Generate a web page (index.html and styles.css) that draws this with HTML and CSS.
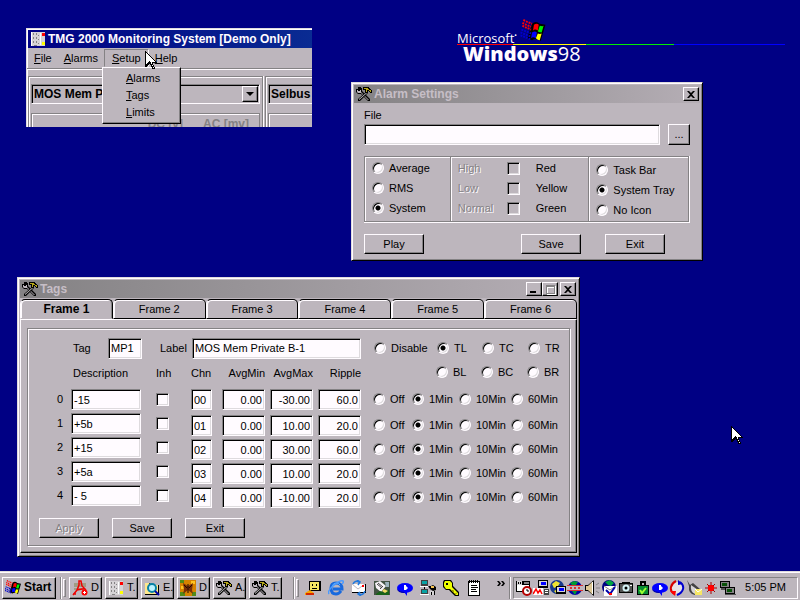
FILE: index.html
```
<!DOCTYPE html>
<html lang="en">
<head>
<meta charset="utf-8">
<title>TMG 2000 Monitoring System</title>
<link rel="stylesheet" href="styles.css">
</head>
<body>
<svg class="sprites" aria-hidden="true">
  <symbol id="tools" viewBox="0 0 16 16">
    <path d="M0 3h2V1h3v1h1v3l8 8v2h-2L5 8H2L0 6z" fill="#000"/>
    <path d="M1 4h1v1h2V4h1V3h0v3l1 1 7 7h-1L5 7H2L1 6z" fill="#bdb6bd"/>
    <path d="M10 6h2v1L4 15H2v-2z" fill="#000"/>
    <path d="M10 7h1L3 14v-1z" fill="#d6d3d6"/>
    <path d="M7 1h6v1h1v1h1v1h1v3h-2V6h-1V5h-1v2H9V4H7z" fill="#000"/>
    <path d="M8 2h4v1h1v1h2v2h-1V5h-1V4h-2v2h-1V3H8z" fill="#b5a618"/>
  </symbol>
  <symbol id="panel" viewBox="0 0 16 16">
    <path d="M1 1h14v14H1z" fill="#d6d3d6"/><path d="M1 1h1v14H1zM10 2h1v12h-1z" fill="#fff"/>
    <path d="M3 2h1v2H3zM3 6h1v2H3zM3 10h1v2H3zM6 2h1v2H6zM6 6h1v2H6zM6 10h1v2H6zM8 4h1v1H8zM8 8h1v1H8zM8 12h1v1H8zM4 14h3v1H4z" fill="#848284"/>
    <path d="M12 2h3v3h-3z" fill="#f00"/><path d="M12 11h3v3h-3z" fill="#ff0"/>
  </symbol>
  <symbol id="flag" viewBox="0 0 26 26">
    <path d="M12 5q4-4 8 0l6 1-5 17q-5-4-9-1l-5-2z" fill="#000"/>
    <path d="M14 6q3-2 5 0l-1 6q-3-2-5 0z" fill="#f00"/><path d="M20 7q3 1 4 0l-2 7q-2 0-4-1z" fill="#0e0"/>
    <path d="M12 14q3-2 5 0l-1 6q-3-2-5 0z" fill="#00f"/><path d="M18 15q2 1 4 0l-2 7q-2 0-4-2z" fill="#ff0"/>
    <path d="M3 1l4 2 5 2M2 4l4 2 5 2M2 7l4 2 5 2" stroke="#f00" stroke-width="2" stroke-dasharray="2 1" fill="none"/>
    <path d="M1 11l5 2 5 2M0 14l5 2 5 2M0 17l5 2 5 2" stroke="#00c" stroke-width="2" stroke-dasharray="2 1" fill="none"/>
  </symbol>
  <symbol id="acrobat" viewBox="0 0 16 16">
    <path d="M2 4h12M2 6h12M2 9h9" stroke="#84824a" stroke-width="1"/>
    <path d="M1 15l4-5 2-5V1h2l1 5 4 4M5 10l5-1h3M1 14h3" stroke="#e00" stroke-width="1.5" fill="none"/>
    <circle cx="12.500" cy="12.500" r="3" fill="#f00"/><path d="M11 12h3v1h-3zM12 11h1v3h-1z" fill="#fff"/>
  </symbol>
  <symbol id="explore" viewBox="0 0 16 16">
    <path d="M1 3h5l1 2h8v10H1z" fill="#000"/><path d="M1 3h4l1 2h8v9H1z" fill="#ffe78c"/>
    <circle cx="8" cy="8" r="4" fill="#bdf3ff" stroke="#0882a5" stroke-width="2"/><path d="M11 11l4 4" stroke="#00a" stroke-width="2"/>
  </symbol>
  <symbol id="butterfly" viewBox="0 0 16 16">
    <path d="M0 0h16v16H0z" fill="#d68200"/><path d="M0 0h4v3H0zM12 12h4v4h-4zM0 12h5v4H0z" fill="#528a18"/><path d="M11 1h4v3h-4zM1 6h3v3H1z" fill="#ffc321"/>
    <path d="M3 3l5 3 5-3-1 7 1 4-5-4-5 4 1-4z" fill="#7b3008"/><path d="M8 4v9M4 5l3 3M12 5L9 8" stroke="#210800"/>
  </symbol>
  <symbol id="shell" viewBox="0 0 16 16">
    <path d="M4 1h12v10H4z" fill="#000"/><path d="M5 2h9v8H5z" fill="#f7e763"/><path d="M7 4h1v2H7zM11 4h1v2h-1zM7 8h5v1H7z" fill="#000"/>
    <path d="M0 13l5-3 4 3-3 2H0z" fill="#f7a500"/><path d="M1 13h8v2H1z" fill="#d62800"/>
  </symbol>
  <symbol id="ie" viewBox="0 0 16 16">
    <path d="M13 11q-2 3-5 3-5 0-5-6 0-5 5-5 6 0 6 6H5" stroke="#1869de" stroke-width="3" fill="none"/>
    <path d="M4 7q1-4 4-4 3 0 4 2" stroke="#63b6ff" fill="none"/>
    <path d="M1 14q-2-3 4-8 7-6 10-5 1 1-1 3" stroke="#4a9aff" stroke-width="1.500" fill="none"/>
  </symbol>
  <symbol id="mail" viewBox="0 0 16 16">
    <path d="M1 4h14v9H1z" fill="#000"/><path d="M1 4h13v8H1z" fill="#fff"/><path d="M1 4l6 5 7-5" stroke="#bdb6bd" fill="none"/><path d="M11 5h2v2h-2z" fill="#f00"/>
    <path d="M2 4q2-4 6-2M6 0l3 2-2 3M14 11q-2 5-6 3M9 12l-2 2 3 2" stroke="#2179de" stroke-width="1.500" fill="none"/>
  </symbol>
  <symbol id="desk" viewBox="0 0 16 16">
    <path d="M0 1h16v14H0z" fill="#425142"/><path d="M1 3l5-2 6 5-5 6-5-4z" fill="#f7f3f7"/><path d="M3 4l5 4M4 3l5 4M6 9l3-3" stroke="#424142"/>
    <path d="M11 2h4v5h-3z" fill="#9cb2bd"/><path d="M2 14l4-3 5 2 4-4v6H2z" fill="#186118"/><path d="M10 9l4 2-3 2-3-2z" fill="#efdb63"/>
  </symbol>
  <symbol id="bubble" viewBox="0 0 16 16">
    <ellipse cx="8" cy="8" rx="8" ry="5" fill="#00f"/><path d="M7 12l3 4v-4z" fill="#00f"/><path d="M0 9q1 4 7 4l1-1Q3 12 0 9" fill="#00a"/><path d="M7 5h2v5H7zM9 6l2 2-2 2z" fill="#fff"/>
  </symbol>
  <symbol id="net" viewBox="0 0 16 16">
    <path d="M1 0h7v6H1zM1 9h7v6H1z" fill="#424142"/><path d="M2 1h5v3H2zM2 10h5v3H2z" fill="#08a2a5"/><path d="M0 6h9v1H0zM0 14h9v1H0z" fill="#fff"/>
    <path d="M8 6h3l2-1 3 2v3l-3 1-3-2z" fill="#000"/><path d="M11 6h3v2h-3z" fill="#f7c352"/><path d="M10 11h5v4h-5z" fill="#d6d3d6"/><path d="M11 12h1v3h-1zM14 11h1v4h-1zM4 7h1v2H4z" fill="#000"/>
  </symbol>
  <symbol id="key" viewBox="0 0 16 16">
    <path d="M1 0h7l2 3v3l6 6v4h-4l-6-6H3L0 7V2z" fill="#000"/><path d="M2 1h5l2 2v4l6 6v2h-2L7 9H3L1 6V3z" fill="#ef0"/><path d="M3 3h2v2H3z" fill="#000"/><path d="M9 10l1 2 1-1M12 14l2-1" stroke="#a59a00"/>
  </symbol>
  <symbol id="note" viewBox="0 0 16 16">
    <path d="M2 1h12v15H2z" fill="#000"/><path d="M3 2h10v13H3z" fill="#fff"/><path d="M3 0h1v3H3zM5 0h1v3H5zM7 0h1v3H7zM9 0h1v3H9zM11 0h1v3h-1zM5 5h6v1H5zM5 7h7v1H5zM5 9h5v1H5zM5 11h6v1H5z" fill="#000"/>
  </symbol>
  <symbol id="sched" viewBox="0 0 16 16">
    <path d="M0 1h14v11H0z" fill="#000"/><path d="M1 5h12v6H1z" fill="#fff"/><path d="M1 1h5v4H1z" fill="#d6d3d6"/><path d="M2 2h1v2H2zM4 2h1v2H4z" fill="#000"/><path d="M8 2h5v2H8z" fill="#848284"/>
    <circle cx="11" cy="11" r="4" fill="#fff" stroke="#b50000" stroke-width="2"/><path d="M11 9v2h2" stroke="#000" fill="none"/>
  </symbol>
  <symbol id="monitor" viewBox="0 0 16 16">
    <path d="M5 0h10v8H5z" fill="#000"/><path d="M6 1h8v5H6z" fill="#d6d3d6"/><path d="M8 2h5v3H8z" fill="#00f"/><path d="M0 8h10v7H0z" fill="#fff"/>
    <path d="M0 14l3-5 2 4 2-3 2 4" stroke="#f00" stroke-width="1.500" fill="none"/><path d="M11 9h5v6h-5z" fill="#424142"/><path d="M12 10h3v1h-3zM12 12h3v1h-3z" fill="#fff"/>
  </symbol>
  <symbol id="worldpc" viewBox="0 0 16 16">
    <circle cx="7" cy="7" r="7" fill="#18388c"/><path d="M2 4l4-3 4 2-2 3-4 2zM4 11l4-2 2 4-3 1z" fill="#efe331"/><path d="M6 6h10v8H6z" fill="#000"/><path d="M7 7h8v5H7z" fill="#d6d3d6"/><path d="M9 8h5v3H9z" fill="#00f"/>
  </symbol>
  <symbol id="band" viewBox="0 0 16 16">
    <circle cx="8" cy="8" r="7" fill="#0000a5"/><path d="M3 3l4-2 4 1-2 3H5zM5 11h5l-2 4z" fill="#009a31"/><path d="M0 6h16v4H0z" fill="#bdb6bd"/><path d="M0 5h16v1H0zM0 10h16v1H0zM3 7h2v2H3zM7 7h2v2H7zM11 7h2v2h-2z" fill="#d63031"/>
  </symbol>
  <symbol id="sound" viewBox="0 0 16 16">
    <path d="M1 5h3l6-5v16l-6-5H1z" fill="#000"/><path d="M2 6h2l4-4v12l-4-4H2z" fill="#dec794"/><path d="M8 2h1v12H8z" fill="#fff"/><path d="M12 5l3-2M12 8h4M12 11l3 2" stroke="#848284"/>
  </symbol>
  <symbol id="mailcheck" viewBox="0 0 16 16">
    <circle cx="8" cy="7" r="7" fill="#000084"/><path d="M4 2l5-2 4 3-3 3-3-1z" fill="#00a242"/><path d="M3 6h13v10H3z" fill="#fff"/><path d="M3 6l6 4 6-4" stroke="#848284" fill="none"/><path d="M5 10l4 4 5-7" stroke="#00a" stroke-width="2" fill="none"/><path d="M8 13h3v2H8z" fill="#f00"/>
  </symbol>
  <symbol id="camera" viewBox="0 0 16 16">
    <path d="M1 3h3V2h8v1h3v10H1z" fill="#000"/><path d="M2 4h12v8H2z" fill="#525152"/><circle cx="8" cy="8" r="3.500" fill="#d6f3f7"/><circle cx="8" cy="8" r="1.500" fill="#000"/><path d="M12 5h2v1h-2z" fill="#fff"/>
  </symbol>
  <symbol id="clip" viewBox="0 0 16 16">
    <path d="M2 5h12v10H2z" fill="#000"/><path d="M3 6h10v8H3z" fill="#088a31"/><path d="M6 5V2h4v3" stroke="#000" stroke-width="2" fill="none"/><path d="M5 10l2 3 4-5" stroke="#9cff31" stroke-width="2" fill="none"/>
  </symbol>
  <symbol id="sync" viewBox="0 0 16 16">
    <circle cx="8" cy="8" r="6" fill="#e7e3e7"/>
    <path d="M5 14Q1 11 2 7t5-6" stroke="#d60000" stroke-width="2" fill="none"/><path d="M11 2q4 3 3 7t-6 6" stroke="#0000ce" stroke-width="2" fill="none"/><path d="M1 11h6l-1 5z" fill="#f00"/><path d="M9 5V0l5 4z" fill="#0000ce"/>
  </symbol>
  <symbol id="dish" viewBox="0 0 16 16">
    <path d="M1 0l3 5 3-2 7 6-5 6q-7-1-6-9z" fill="#424142"/><path d="M5 5l7 5-3 4q-5-2-4-9z" fill="#d6d3d6"/><path d="M9 9h7v6H9z" fill="#f7e763"/><path d="M9 9l3 3 4-3" stroke="#fff" fill="none"/>
  </symbol>
  <symbol id="sun" viewBox="0 0 16 16">
    <path d="M8 2v12M2 8h12M4 4l8 8M12 4l-8 8" stroke="#a50000" stroke-width="1"/><path d="M6 5h4v1h1v4h-1v1H6v-1H5V6h1z" fill="#f00"/>
  </symbol>
  <symbol id="dialup" viewBox="0 0 16 16">
    <path d="M0 1h10v7H0zM5 7h10v8H5z" fill="#000"/><path d="M1 2h8v5H1zM6 8h8v5H6z" fill="#848284"/><path d="M2 3h5v3H2zM7 9h5v3H7z" fill="#085108"/><path d="M1 8h4v2H1zM5 14h11v1H5z" fill="#525152"/>
  </symbol>
  <symbol id="arrow" viewBox="0 0 12 19">
    <path d="M0 0h1v1h1v1h1v1h1v1h1v1h1v1h1v1h1v1h1v1h1v1h1v1h1v1H8v2h1v2h1v2H7v-2H6v-2H5v-1H4v1H3v1H2v1H0z" fill="#000"/>
    <path d="M1 2h1v1h1v1h1v1h1v1h1v1h1v1h1v1h1v1h1v1H7v3h1v2h1v1H8v-2H7v-2H6v-2H5v-1H4v1H3v1H2v1H1z" fill="#fff"/>
  </symbol>
</svg>

<main class="desktop">
  <section class="clip">
    <div class="app">
      <header class="titlebar active"><svg class="icon"><use href="#panel"/></svg><h2>TMG 2000 Monitoring System [Demo Only]</h2></header>
      <nav class="menubar">
        <button><u>F</u>ile</button><button><u>A</u>larms</button><button class="open" aria-expanded="true"><u>S</u>etup</button><button><u>H</u>elp</button>
      </nav>
      <div class="units">
        <section class="unit">
          <button class="combo"><span>MOS Mem P</span><i class="drop"></i></button>
          <div class="readout"><span>DC [v]</span><span>AC [mv]</span></div>
        </section>
        <section class="unit">
          <button class="combo"><span>Selbus</span></button>
          <div class="readout"></div>
        </section>
      </div>
    </div>
    <div class="popup" role="menu">
      <button role="menuitem"><u>A</u>larms</button><button role="menuitem"><u>T</u>ags</button><button role="menuitem"><u>L</u>imits</button>
    </div>
    <svg class="pointer in-menu"><use href="#arrow"/></svg>
  </section>

  <div class="brand">
    <div class="maker">Microsoft<sup>•</sup></div>
    <div class="stripe"><i class="red"></i><i class="yellow"></i><i class="green"></i><i class="blue"></i></div>
    <div class="product"><b>Windows</b><span>98</span></div>
    <svg class="brand-flag"><use href="#flag"/></svg>
  </div>

  <section class="window alarm">
    <header class="titlebar"><svg class="icon"><use href="#tools"/></svg><h2>Alarm Settings</h2><button class="caption" aria-label="Close"><svg viewBox="0 0 8 7"><path d="M0 0h2l2 2 2-2h2L5 3.500 8 7H6L4 5 2 7H0l3-3.500z"/></svg></button></header>
    <form class="alarm-form">
      <label class="file-label" for="file">File</label>
      <div class="file-row"><input class="field" id="file" type="text"><button type="button" class="btn browse">...</button></div>
      <div class="groups">
        <fieldset class="group modes">
          <label class="opt"><input type="radio" name="mode">Average</label>
          <label class="opt"><input type="radio" name="mode">RMS</label>
          <label class="opt"><input type="radio" name="mode" checked>System</label>
        </fieldset>
        <fieldset class="group levels">
          <label class="level"><span class="off">High</span><input type="checkbox" disabled><span>Red</span></label>
          <label class="level"><span class="off">Low</span><input type="checkbox" disabled><span>Yellow</span></label>
          <label class="level"><span class="off">Normal</span><input type="checkbox" disabled><span>Green</span></label>
        </fieldset>
        <fieldset class="group places">
          <label class="opt"><input type="radio" name="place">Task Bar</label>
          <label class="opt"><input type="radio" name="place" checked>System Tray</label>
          <label class="opt"><input type="radio" name="place">No Icon</label>
        </fieldset>
      </div>
      <div class="alarm-actions"><button type="button" class="btn">Play</button><button type="button" class="btn save">Save</button><button type="button" class="btn">Exit</button></div>
    </form>
  </section>

  <section class="window tags">
    <header class="titlebar"><svg class="icon"><use href="#tools"/></svg><h2>Tags</h2>
      <button class="caption" aria-label="Minimize"><svg viewBox="0 0 8 7"><path d="M0 5h6v2H0z"/></svg></button><button class="caption" disabled aria-label="Maximize"><svg viewBox="0 0 9 9"><path d="M1 1h9v9H1zM2 3v6h7V3z" fill="#fff" fill-rule="evenodd"/><path d="M0 0h9v9H0zM1 2v6h7V2z" fill="#848284" fill-rule="evenodd"/></svg></button><button class="caption close" aria-label="Close"><svg viewBox="0 0 8 7"><path d="M0 0h2l2 2 2-2h2L5 3.500 8 7H6L4 5 2 7H0l3-3.500z"/></svg></button>
    </header>
    <div class="tabs" role="tablist">
      <button role="tab" aria-selected="true">Frame 1</button><button role="tab">Frame 2</button><button role="tab">Frame 3</button><button role="tab">Frame 4</button><button role="tab">Frame 5</button><button role="tab">Frame 6</button>
    </div>
    <form class="page">
      <div class="sheet">
        <div class="ident">
          <label class="tag-label" for="tag">Tag</label><input class="field" id="tag" value="MP1">
          <label class="name-label" for="name">Label</label><input class="field" id="name" value="MOS Mem Private B-1">
          <div class="spots"><label class="opt"><input type="radio" name="spot">Disable</label><label class="opt"><input type="radio" name="spot" checked>TL</label><label class="opt"><input type="radio" name="spot">TC</label><label class="opt"><input type="radio" name="spot">TR</label></div>
        </div>
        <table>
          <colgroup><col class="c-num"><col class="c-desc"><col class="c-inh"><col class="c-chn"><col class="c-val"><col class="c-val"><col class="c-val"><col></colgroup>
          <thead><tr><th></th><th>Description</th><th>Inh</th><th>Chn</th><th class="r">AvgMin</th><th class="r">AvgMax</th><th class="r">Ripple</th>
            <td><div class="spots"><span></span><label class="opt"><input type="radio" name="spot">BL</label><label class="opt"><input type="radio" name="spot">BC</label><label class="opt"><input type="radio" name="spot">BR</label></div></td></tr></thead>
          <tbody id="rows"></tbody>
        </table>
        <div class="tag-actions"><button type="button" class="btn" disabled>Apply</button><button type="button" class="btn">Save</button><button type="button" class="btn">Exit</button></div>
      </div>
    </form>
  </section>

  <svg class="pointer on-desk"><use href="#arrow"/></svg>
</main>

<footer class="taskbar">
  <button class="task start"><svg class="icon"><use href="#flag"/></svg>Start</button>
  <i class="bar"></i><i class="grip"></i>
  <div class="tasks">
    <button class="task"><svg class="icon"><use href="#acrobat"/></svg>D</button>
    <button class="task"><svg class="icon"><use href="#panel"/></svg>T.</button>
    <button class="task"><svg class="icon"><use href="#explore"/></svg>E.</button>
    <button class="task"><svg class="icon"><use href="#butterfly"/></svg>D</button>
    <button class="task"><svg class="icon"><use href="#tools"/></svg>A.</button>
    <button class="task"><svg class="icon"><use href="#tools"/></svg>T.</button>
  </div>
  <i class="bar"></i><i class="grip"></i>
  <div class="quick">
    <svg class="icon"><use href="#shell"/></svg><svg class="icon"><use href="#ie"/></svg><svg class="icon"><use href="#mail"/></svg><svg class="icon"><use href="#desk"/></svg><svg class="icon"><use href="#bubble"/></svg><svg class="icon"><use href="#net"/></svg><svg class="icon"><use href="#key"/></svg><svg class="icon"><use href="#note"/></svg>
  </div>
  <button class="more" aria-label="More"><svg viewBox="0 0 8 5"><path d="M0 0h2l2 2.500L2 5H0l2-2.500zM4 0h2l2 2.500L6 5H4l2-2.500z"/></svg></button>
  <i class="bar"></i>
  <div class="tray">
    <svg class="icon"><use href="#sched"/></svg><svg class="icon"><use href="#monitor"/></svg><svg class="icon"><use href="#worldpc"/></svg><svg class="icon"><use href="#band"/></svg><svg class="icon"><use href="#sound"/></svg><svg class="icon"><use href="#mailcheck"/></svg><svg class="icon"><use href="#camera"/></svg><svg class="icon"><use href="#clip"/></svg><svg class="icon"><use href="#bubble"/></svg><svg class="icon"><use href="#sync"/></svg><svg class="icon"><use href="#dish"/></svg><svg class="icon"><use href="#sun"/></svg><svg class="icon"><use href="#dialup"/></svg>
    <time>5:05 PM</time>
  </div>
</footer>
<script src="rows.js"></script>
</body>
</html>
```
FILE: rows.js
```
const rows = [
  ["-15", "00", "0.00", "-30.00", "60.0"],
  ["+5b", "01", "0.00", "10.00", "20.0"],
  ["+15", "02", "0.00", "30.00", "60.0"],
  ["+5a", "03", "0.00", "10.00", "20.0"],
  ["- 5", "04", "0.00", "-10.00", "20.0"]
];
const columns = ["Description", "Channel", "Average minimum", "Average maximum", "Ripple"];
const field = (row, i, col) =>
  `<input class="field${col > 1 ? " num" : ""}" aria-label="${columns[col]} ${i}" value="${row[col]}">`;
const times = ["Off", "1Min", "10Min", "60Min"];

document.getElementById("rows").innerHTML = rows.map((row, i) => `
  <tr>
    <th scope="row">${i}</th>
    <td class="desc">${field(row, i, 0)}</td>
    <td class="inh"><input type="checkbox" aria-label="Inhibit ${i}"></td>
    ${[1, 2, 3, 4].map(col => `<td class="reading">${field(row, i, col)}</td>`).join("")}
    <td class="reading"><div class="times">${times.map((t, n) =>
      `<label class="opt"><input type="radio" name="time${i}"${n === 1 ? " checked" : ""}>${t}</label>`).join("")}</div></td>
  </tr>`).join("");
```
FILE: styles.css
```
:root {
  --face: #bdb6bd;
  --light: #dedbde;
  --hi: #fffbff;
  --shade: #848284;
  --desk: #000084;
}
* { box-sizing: border-box; }
body {
  margin: 0;
  height: 100vh;
  display: flex;
  flex-direction: column;
  overflow: hidden;
  background: var(--desk);
  color: #000;
  font: 11px/13px "Liberation Sans", Arial, sans-serif;
}
button, input { font: inherit; color: inherit; margin: 0; }
button { background: none; border: 0; padding: 0; }
h2 { margin: 0; font-size: 12px; line-height: 16px; white-space: nowrap; }
i { display: block; }
.sprites { position: absolute; width: 0; height: 0; }
.icon { width: 16px; height: 16px; flex: none; display: block; }
.desktop { position: relative; flex: 1; }

/* Windows */
.window {
  position: absolute;
  padding: 1px;
  background: var(--face);
  border: 1px solid;
  border-color: var(--light) #000 #000 var(--light);
  box-shadow: inset 1px 1px var(--hi), inset -1px -1px var(--shade);
}
.titlebar {
  display: flex;
  align-items: center;
  height: 18px;
  margin: 1px;
  padding: 0 1px 0 2px;
  gap: 2px;
  color: #c6bec6;
  background: linear-gradient(90deg, #848284, #b5aeb5);
}
.titlebar h2 { flex: 1; }
.titlebar.active {
  color: var(--hi);
  background: linear-gradient(90deg, #000084, #10499c);
}
.caption, .btn, .task, .drop {
  background: var(--face);
  border: 1px solid;
  border-color: var(--hi) #000 #000 var(--hi);
  box-shadow: inset -1px -1px var(--shade);
}
.caption {
  display: grid;
  place-items: center;
  width: 16px;
  height: 14px;
  margin-left: -2px;
}
.caption svg { width: 8px; height: 7px; overflow: visible; }
.caption:disabled svg { width: 9px; height: 9px; }
.caption.close { margin-left: 0; }
.btn { width: 60px; height: 20px; text-align: center; }
.btn:disabled { color: var(--shade); text-shadow: 1px 1px var(--hi); }

/* Form controls */
.field {
  min-width: 0;
  height: 21px;
  padding: 0 2px;
  background: var(--hi);
  border: 1px solid;
  border-color: var(--shade) var(--hi) var(--hi) var(--shade);
  border-radius: 0;
  box-shadow: inset 1px 1px #000, inset -1px -1px var(--light);
  outline: 0;
}
input[type="radio"], input[type="checkbox"] {
  appearance: none;
  flex: none;
  width: 12px;
  height: 12px;
  background: var(--hi);
  border: 1px solid;
  border-color: var(--shade) var(--hi) var(--hi) var(--shade);
  box-shadow: inset 1px 1px #000, inset -1px -1px var(--light);
}
input[type="checkbox"] { width: 13px; height: 13px; }
input[type="checkbox"]:disabled { background: var(--face); }
input[type="radio"] { border-radius: 50%; }
input[type="radio"]:checked { background: radial-gradient(circle, #000 2px, var(--hi) 3px); }
.opt { display: flex; align-items: center; gap: 5px; height: 20px; white-space: nowrap; }

/* Main application, cut off by its frame */
.clip { position: absolute; left: 26px; top: 28px; width: 286px; height: 99px; overflow: hidden; }
.app {
  height: 160px;
  width: 480px;
  background: var(--face);
  border: 1px solid var(--light);
  box-shadow: inset 1px 1px var(--hi);
}
.app .titlebar { margin-bottom: 0; }
.menubar {
  display: flex;
  height: 21px;
  padding: 1px 0 1px 1px;
  border-bottom: 1px solid var(--shade);
  box-shadow: 0 1px var(--hi);
}
.menubar button { padding: 0 6px; height: 18px; }
.menubar .open { padding: 0 7px; border: 1px solid; border-color: var(--shade) var(--hi) var(--face) var(--shade); }
.units { display: flex; gap: 2px; padding: 7px 0 0 1px; }
.unit {
  width: 235px;
  flex: none;
  height: 90px;
  padding: 7px 2px;
  border: 1px solid var(--shade);
  box-shadow: inset 1px 1px var(--hi), 1px 0 var(--hi);
}
.combo {
  display: flex;
  align-items: center;
  width: 100%;
  height: 20px;
  padding: 1px 1px 1px 2px;
  font-size: 12px;
  font-weight: bold;
  text-align: left;
  border: 1px solid;
  border-color: var(--shade) var(--hi) var(--hi) var(--shade);
  box-shadow: inset 1px 1px #000;
}
.combo span { flex: 1; }
.drop { width: 16px; height: 16px; display: grid; place-items: center; }
.drop::before { content: ""; border: 4px solid transparent; border-top-color: #000; border-bottom: 0; }
.readout {
  display: flex;
  justify-content: flex-end;
  gap: 20px;
  height: 50px;
  margin-top: 9px;
  padding: 4px 10px;
  color: var(--shade);
  font-size: 12px;
  font-weight: bold;
  border: 1px solid var(--shade);
  box-shadow: inset 1px 1px var(--hi);
}
.popup {
  position: absolute;
  left: 76px;
  top: 39px;
  width: 79px;
  height: 57px;
  padding: 2px;
  display: flex;
  flex-direction: column;
  background: var(--face);
  border: 1px solid;
  border-color: var(--hi) #000 #000 var(--hi);
  box-shadow: inset -1px -1px var(--shade);
}
.popup button { height: 17px; padding-left: 21px; text-align: left; }
.pointer { position: absolute; width: 12px; height: 19px; }
.in-menu { left: 119px; top: 23px; }
.on-desk { left: 731px; top: 426px; }

/* Desktop logo */
.brand { position: absolute; left: 457px; top: 19px; right: 15px; color: var(--hi); }
.maker { padding-top: 10px; height: 25px; font: 400 13px/19px "Open Sans", sans-serif; }
.maker sup { font-size: 7px; line-height: 0; }
.stripe { display: flex; height: 1px; }
.stripe .red { flex: 56; background: #f00; }
.stripe .yellow { flex: 73; background: #ff0; }
.stripe .green { flex: 88; background: #0e0; }
.stripe .blue { flex: 111; background: #00f; }
.product { display: flex; padding-left: 6px; font: 400 20px/17px "Open Sans", sans-serif; }
.product b { font-weight: 800; }
.brand-flag { position: absolute; left: 63px; top: 0; width: 26px; height: 25px; }

/* Alarm settings */
.alarm { left: 351px; top: 82px; width: 352px; }
.alarm-form { padding: 5px 11px 5px 11px; }
.file-label { display: block; height: 15px; }
.file-row { display: flex; gap: 8px; }
.file-row .field { flex: 1; }
.browse { width: 22px; height: 21px; }
.groups { display: flex; height: 67px; margin-top: 11px; border-right: 1px solid var(--hi); border-bottom: 1px solid var(--hi); }
.group {
  min-width: 0;
  margin: 0;
  padding: 1px 0 1px 7px;
  border: 1px solid var(--shade);
  border-right: 0;
  box-shadow: inset 1px 1px var(--hi);
}
.modes { flex: 84; }
.levels { flex: 141; }
.places { flex: 99; padding-top: 3px; border-right: 1px solid var(--shade); }
.level { display: grid; grid-template-columns: 49px 29px 1fr; align-items: center; height: 20px; }
.off { color: var(--shade); text-shadow: 1px 1px var(--hi); }
.alarm-actions { display: flex; gap: 24px; margin-top: 11px; padding-right: 25px; }
.save { margin-left: auto; }

/* Tags */
.tags { left: 17px; top: 277px; width: 563px; }
.tabs { display: flex; padding: 0 1px; }
.tabs button {
  flex: 1;
  height: 20px;
  border: 1px solid;
  border-color: #000 #000 #000 var(--hi);
  border-radius: 5px 5px 0 0;
  box-shadow: inset 1px 1px var(--hi);
}
.tabs [aria-selected] {
  font-size: 12px;
  font-weight: bold;
  border-bottom-color: var(--face);
  box-shadow: inset 1px 1px var(--hi), inset -1px 0 var(--shade);
}
.page {
  margin: 0 1px 2px;
  padding: 8px 6px 6px;
  border: 1px solid;
  border-color: var(--hi) #000 #000 var(--hi);
  box-shadow: inset -1px -1px var(--shade);
}
.sheet {
  padding: 8px 0 7px 11px;
  border: 1px solid var(--shade);
  box-shadow: inset 1px 1px var(--hi), 1px 1px var(--hi);
}
.ident { display: flex; align-items: center; height: 22px; }
.tag-label { margin-left: 34px; width: 35px; }
#tag { width: 34px; }
.name-label { margin-left: 18px; width: 32px; }
#name { width: 169px; }
.ident .spots { margin-left: 13px; }
.spots { display: grid; grid-template-columns: 63px 45px 46px auto; }
.times { display: grid; grid-template-columns: 39px 47px 52px auto; }
table { width: 100%; table-layout: fixed; border-collapse: collapse; }
th, td { padding: 0; font-weight: normal; text-align: left; vertical-align: top; }
thead tr { height: 30px; }
thead th { padding-top: 8px; }
thead th:nth-child(2) { padding-left: 2px; }
thead .r { text-align: right; padding-right: 5px; }
thead td { padding-top: 3px; }
td:last-child { padding-left: 7px; }
tbody tr { height: 24px; }
tbody th { padding: 4px 0 0 18px; }
.c-num { width: 32px; }
.c-desc { width: 85px; }
.c-inh { width: 35px; }
.c-chn { width: 31px; }
.c-val { width: 48px; }
tbody .field { display: block; }
.desc .field { width: 70px; }
.inh { padding-top: 4px; }
.inh input { display: block; }
.reading .field { width: 21px; }
.reading .num { width: 43px; text-align: right; }
tbody tr + tr .reading { padding-top: 2px; }
.tag-actions { display: flex; gap: 13px; margin-top: 9px; }

/* Taskbar */
.taskbar {
  display: flex;
  align-items: center;
  height: 28px;
  padding: 3px 2px 1px;
  background: var(--face);
  border-top: 1px solid var(--hi);
  box-shadow: 0 -1px var(--light);
}
.task { display: flex; align-items: center; gap: 3px; width: 33px; height: 22px; padding-left: 2px; overflow: hidden; }
.start { width: 54px; font-size: 12px; font-weight: bold; }
.tasks { display: flex; gap: 3px; margin: 0 7px 0 3px; }
.bar { width: 2px; height: 22px; margin-left: 4px; border-left: 1px solid var(--shade); border-right: 1px solid var(--hi); }
.grip { width: 3px; height: 18px; margin-left: 1px; border: 1px solid; border-color: var(--hi) var(--shade) var(--shade) var(--hi); }
.quick { display: flex; flex: 1; gap: 7px; margin-left: 6px; }
.more { width: 8px; padding-bottom: 8px; }
.more svg { display: block; width: 8px; height: 5px; }
.tray {
  display: flex;
  align-items: center;
  gap: 1px;
  height: 22px;
  margin-left: 2px;
  padding: 0 11px 0 2px;
  border: 1px solid;
  border-color: var(--shade) var(--hi) var(--hi) var(--shade);
}
.tray time { margin-left: 8px; white-space: nowrap; }
```
